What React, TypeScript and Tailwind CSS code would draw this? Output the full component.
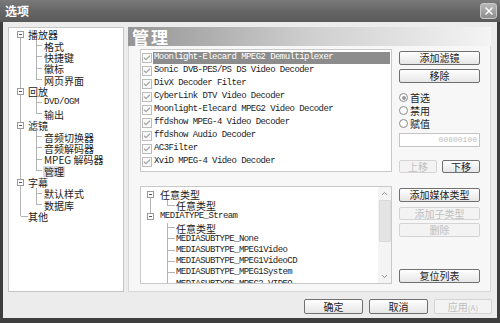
import { Check, ChevronUp, ChevronDown, X } from 'lucide-react';

const CJK = "font-['Noto_Sans_CJK_SC',sans-serif]";
const MONO = "font-['Liberation_Mono','Noto_Sans_CJK_SC',monospace]";

const NAV = [
  { label: '播放器', children: ['格式', '快捷键', '徽标', '网页界面'] },
  { label: '回放', children: ['DVD/OGM', '输出'] },
  { label: '滤镜', children: ['音频切换器', '音频解码器', 'MPEG 解码器', '管理'] },
  { label: '字幕', children: ['默认样式', '数据库'] },
  { label: '其他', children: [] as string[] },
];

const FILTERS = [
  'Moonlight-Elecard MPEG2 Demultiplexer',
  'Sonic DVB-PES/PS  DS Video Decoder',
  'DivX Decoder Filter',
  'CyberLink DTV Video Decoder',
  'Moonlight-Elecard MPEG2 Video Decoder',
  'ffdshow MPEG-4 Video Decoder',
  'ffdshow Audio Decoder',
  'AC3Filter',
  'XviD MPEG-4 Video Decoder',
];

const SUBTYPES = [
  'MEDIASUBTYPE_None',
  'MEDIASUBTYPE_MPEG1Video',
  'MEDIASUBTYPE_MPEG1VideoCD',
  'MEDIASUBTYPE_MPEG1System',
  'MEDIASUBTYPE_MPEG2_VIDEO',
];

function MinusBox() {
  return (
    <div className="w-[7px] h-[7px] shrink-0 border border-[#9a9a9a] bg-white flex items-center justify-center">
      <div className="w-[3px] h-px bg-[#555]" />
    </div>
  );
}

// vertical guide + horizontal stub; half = last child (line stops at middle)
function Guide({ w, half }: { w: string; half?: boolean }) {
  return (
    <div className={`${w} h-full shrink-0 flex flex-col`}>
      <div className="h-1/2 border-l border-b border-[#b4b4b4]" />
      {!half && <div className="h-1/2 border-l border-[#b4b4b4]" />}
    </div>
  );
}

function Btn({ label, disabled, className = '' }: { label: React.ReactNode; disabled?: boolean; className?: string }) {
  return (
    <div
      className={`flex items-center justify-center rounded-[2px] border text-[10px] leading-none ${CJK} ${
        disabled
          ? 'border-[#d4d4d4] bg-[#f3f3f3] text-[#c0c0c0]'
          : 'border-[#707070] bg-gradient-to-b from-white to-[#e6e6e6] text-[#1e1e1e]'
      } ${className}`}
    >
      {label}
    </div>
  );
}

function Radio({ label, on }: { label: string; on?: boolean }) {
  return (
    <div className="h-[13px] flex items-center gap-[2px]">
      <div className="w-[9px] h-[9px] rounded-full border border-[#8a8a8a] bg-white flex items-center justify-center">
        {on && <div className="w-[4px] h-[4px] rounded-full bg-[#9a9a9a]" />}
      </div>
      <span className={`text-[10px] leading-[12px] text-[#222] ${CJK}`}>{label}</span>
    </div>
  );
}

function NavTree() {
  return (
    <div className="w-[116px] shrink-0 h-full bg-white border border-[#c6c6c6] pt-[1px]">
      {NAV.map((node, i) => {
        const last = i === NAV.length - 1;
        return (
          <div key={node.label}>
            <div className="h-[11.375px] flex items-center">
              <div className="w-[8px] shrink-0" />
              <div className="w-[7px] h-full shrink-0 flex flex-col items-center">
                <div className={`flex-1 w-px ${i === 0 ? '' : 'bg-[#b4b4b4]'}`} />
                {node.children.length ? (
                  <MinusBox />
                ) : (
                  <div className="h-px w-[7px] bg-[#b4b4b4] ml-[7px]" />
                )}
                <div className={`flex-1 w-px ${last ? '' : 'bg-[#b4b4b4]'}`} />
              </div>
              <span className={`ml-[4px] text-[10px] leading-[11px] text-[#1c1c1c] ${CJK}`}>{node.label}</span>
            </div>
            {node.children.map((c, j) => (
              <div key={c} className="h-[11.375px] flex items-center">
                <div className="w-[11px] shrink-0" />
                <div className={`w-[16px] h-full shrink-0 ${last ? '' : 'border-l border-[#b4b4b4]'}`} />
                <Guide w="w-[6px]" half={j === node.children.length - 1} />
                <span
                  className={`ml-[1px] px-[1px] leading-[11px] text-[#1c1c1c] ${
                    c.startsWith('DVD') ? `${MONO} text-[9px] tracking-[-0.4px]` : `${CJK} text-[10px]`
                  } ${c === '管理' ? 'bg-[#dcdcdc]' : ''}`}
                >
                  {c}
                </span>
              </div>
            ))}
          </div>
        );
      })}
    </div>
  );
}

function TypeRow({ level, label, box, half, root }: { level: 0 | 1; label: string; box?: boolean; half?: boolean; root?: 'mid' | 'end' | 'none' }) {
  const mono = /^[A-Z]/.test(label);
  return (
    <div className="h-[11.2px] flex items-center">
      <div className="w-[6px] shrink-0" />
      {level === 0 ? (
        <div className="w-[7px] h-full shrink-0 flex flex-col items-center">
          <div className={`flex-1 w-px ${root === 'none' ? '' : 'bg-[#b4b4b4]'}`} />
          {box && <MinusBox />}
          <div className={`flex-1 w-px ${root === 'end' ? '' : 'bg-[#b4b4b4]'}`} />
        </div>
      ) : (
        <>
          <div className="w-[3px] shrink-0" />
          <div className={`w-[17px] h-full shrink-0 ${root === 'end' ? '' : 'border-l border-[#b4b4b4]'}`} />
          <Guide w="w-[8px]" half={half} />
        </>
      )}
      <span
        className={`whitespace-nowrap text-[#1c1c1c] ${level === 0 ? 'ml-[6px]' : 'ml-[1px]'} ${
          mono ? `${MONO} text-[9px] tracking-[-0.56px] leading-[11px]` : `${CJK} text-[10px] leading-[11px]`
        }`}
      >
        {label}
      </span>
    </div>
  );
}

export default function App() {
  return (
    <div className="w-[500px] h-[323px] bg-[#3e3e3e] flex flex-col overflow-hidden">
      {/* Title bar */}
      <div className="h-[22px] shrink-0 bg-gradient-to-b from-[#7a7a7a] via-[#666] to-[#5a5a5a] flex items-center justify-between pl-[5px] pr-[3px]">
        <span className={`text-[12px] font-bold text-white ${CJK}`}>选项</span>
        <div className="w-[17px] h-[16px] rounded-[3px] border border-[#c8c8c8] bg-gradient-to-b from-[#b8b8b8] to-[#8e8e8e] flex items-center justify-center">
          <X size={12} strokeWidth={3} color="#ffffff" />
        </div>
      </div>

      {/* Body */}
      <div className="flex-1 mx-[3px] mb-[5px] bg-[#ececec] flex flex-col px-[5px] pt-[5px]">
        <div className="flex h-[265px] gap-[4px]">
          <NavTree />

          {/* Right panel */}
          <div className="w-[363px] shrink-0 h-full flex flex-col">
            <div className="h-[19px] shrink-0 bg-gradient-to-r from-[#959595] via-[#cfcfcf] to-[#f4f4f4] flex items-center pl-[4px]">
              <span className={`text-[17px] leading-none font-bold text-white tracking-[2px] ${CJK}`}>管理</span>
            </div>
            <div className="flex-1 bg-[#f7f7f7] border border-[#d8d8d8] border-t-0 pl-[11px] pt-[3px] flex flex-col">
              {/* Filters */}
              <div className="flex">
                <div className="w-[252px] h-[123px] bg-white border border-[#c9c9c9] pt-[1px]">
                  {FILTERS.map((f, i) => (
                    <div key={f} className="h-[13px] flex items-center pl-[1px] pr-[1px]">
                      <div className="w-[10px] h-[10px] shrink-0 border border-[#bcbcbc] bg-[#fafafa] flex items-center justify-center">
                        <Check size={8} strokeWidth={3.5} color="#a2a2a2" />
                      </div>
                      <span
                        className={`flex-1 ml-[1px] pl-[1px] h-[12px] flex items-center whitespace-nowrap text-[9px] tracking-[-0.56px] leading-none ${MONO} ${
                          i === 0 ? 'bg-[#8c8c8c] text-white' : 'text-[#1c1c1c]'
                        }`}
                      >
                        {f}
                      </span>
                    </div>
                  ))}
                </div>
                <div className="ml-[7px] w-[81px] flex flex-col">
                  <Btn label="添加滤镜" className="mt-[2px] h-[14px]" />
                  <Btn label="移除" className="mt-[4px] h-[14px]" />
                  <div className="mt-[8px]">
                    <Radio label="首选" on />
                    <Radio label="禁用" />
                    <Radio label="赋值" />
                  </div>
                  <div className={`mt-[3px] h-[14px] border border-[#c4c4c4] bg-white flex items-center justify-end pr-[2px] text-[8px] text-[#bdbdbd] ${MONO}`}>
                    00800100
                  </div>
                  <div className="mt-[13px] flex justify-between">
                    <Btn label="上移" disabled className="w-[38px] h-[13px]" />
                    <Btn label="下移" className="w-[38px] h-[13px]" />
                  </div>
                </div>
              </div>

              {/* Media types */}
              <div className="flex mt-[13px]">
                <div className="w-[252px] h-[98px] bg-white border border-[#c9c9c9] flex overflow-hidden">
                  <div className="flex-1 pt-[2px] overflow-hidden">
                    <TypeRow level={0} label="任意类型" box root="none" />
                    <TypeRow level={1} label="任意类型" half />
                    <TypeRow level={0} label="MEDIATYPE_Stream" box root="end" />
                    <TypeRow level={1} label="任意类型" root="end" />
                    {SUBTYPES.map((s) => (
                      <TypeRow key={s} level={1} label={s} root="end" />
                    ))}
                  </div>
                  <div className="w-[13px] h-full shrink-0 bg-[#f4f4f4] flex flex-col items-center">
                    <div className="h-[13px] flex items-center justify-center">
                      <ChevronUp size={9} strokeWidth={2.5} color="#8a8a8a" />
                    </div>
                    <div className="w-[12px] h-[42px] bg-[#e4e4e4] border border-[#dadada] rounded-[1px]" />
                    <div className="flex-1" />
                    <div className="h-[13px] flex items-center justify-center">
                      <ChevronDown size={9} strokeWidth={2.5} color="#8a8a8a" />
                    </div>
                  </div>
                </div>
                <div className="ml-[7px] w-[81px] flex flex-col">
                  <Btn label="添加媒体类型" className="mt-[2px] h-[14px]" />
                  <Btn label="添加子类型" disabled className="mt-[5px] h-[13px]" />
                  <Btn label="删除" disabled className="mt-[3px] h-[14px]" />
                  <Btn label="复位列表" className="mt-auto mb-px h-[14px]" />
                </div>
              </div>
            </div>
          </div>
        </div>

        {/* Dialog buttons */}
        <div className="flex justify-end gap-[6px] mt-[7px]">
          <Btn label="确定" className="w-[59px] h-[15px]" />
          <Btn label="取消" className="w-[59px] h-[15px]" />
          <Btn
            label={
              <span>
                应用<span className="text-[8px]">(A)</span>
              </span>
            }
            disabled
            className="w-[58px] h-[15px]"
          />
        </div>
      </div>
    </div>
  );
}
